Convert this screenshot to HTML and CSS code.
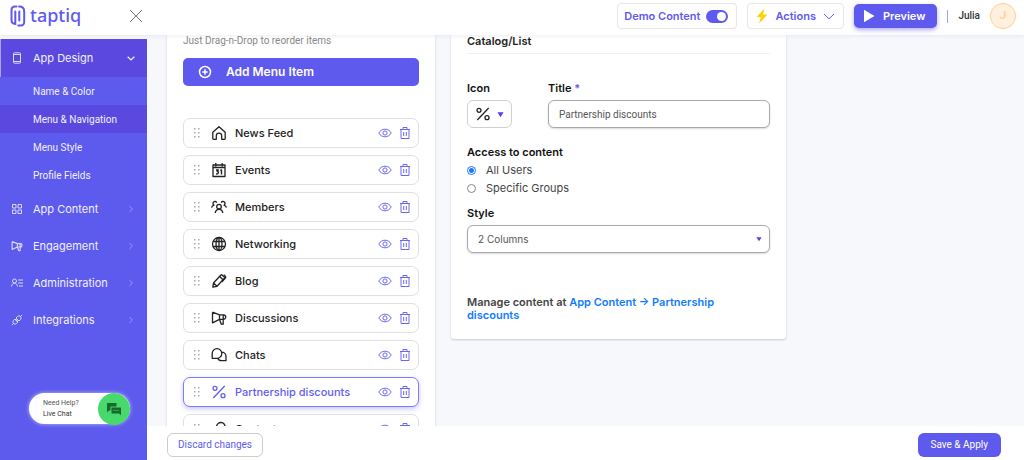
FILE: index.html
```html
<!DOCTYPE html>
<html lang="en">
<head>
<meta charset="utf-8">
<meta name="viewport" content="width=device-width, initial-scale=1">
<title>taptiq – Menu &amp; Navigation</title>
<link rel="stylesheet" href="styles.css">
</head>
<body>
<svg class="sprite" aria-hidden="true">
  <symbol id="grip" viewBox="0 0 8 10"><path fill="currentColor" d="M1 0h1.500v1.500H1zM5 0h1.500v1.500H5zM1 4h1.500v1.500H1zM5 4h1.500v1.500H5zM1 8h1.500v1.500H1zM5 8h1.500v1.500H5z"/></symbol>
  <symbol id="eye" viewBox="0 0 14 14"><path d="M.8 7C2.200 4.500 4.500 3.200 7 3.200S11.800 4.500 13.200 7C11.800 9.500 9.500 10.800 7 10.800S2.200 9.500.8 7z"/><circle cx="7" cy="7" r="2.100"/></symbol>
  <symbol id="trash" viewBox="0 0 12 14"><path d="M1 3.500h10M4 3.300V1.500h4v1.800M2 3.500v9h8v-9M4.700 6v4M7.300 6v4"/></symbol>
  <symbol id="home" viewBox="0 0 16 16"><path d="M1.800 7.300 8 1.800l6.200 5.500v6.200q0 .8-.8.800h-2.700v-3.500a2.700 2.700 0 0 0-5.400 0v3.500H2.600q-.8 0-.8-.8z"/></symbol>
  <symbol id="calendar" viewBox="0 0 16 16"><path d="M2 3h12v11.500H2zM2 5.500h12M4.800 1v3.500M11.200 1v3.500"/><path d="M5 8h2.300L6.200 9.500q1.300 0 1.200 1.200T5 12M9.300 8.500l1.200-.5v4.400" stroke-width="1.400"/></symbol>
  <symbol id="members" viewBox="0 0 16 16"><circle cx="8" cy="7.700" r="2.300"/><path d="M4.200 14c.4-2.300 1.800-3.600 3.800-3.600s3.400 1.300 3.800 3.600M5.800 3.600A2 2 0 1 0 3 6.200C1.700 6.500.9 7.300.6 8.600M10.200 3.600A2 2 0 1 1 13 6.200c1.300.3 2.100 1.100 2.400 2.400"/></symbol>
  <symbol id="globe" viewBox="0 0 16 16"><circle cx="8" cy="8" r="6.500"/><ellipse cx="8" cy="8" rx="3" ry="6.500"/><path d="M8 1.500v13M2.200 5.500h11.600M2.200 10.500h11.600"/></symbol>
  <symbol id="pencil" viewBox="0 0 16 16"><path d="M1.800 14.200 2.500 10 9.700 2.200q.8-.8 1.600 0l1.900 1.700q.8.800 0 1.600L6 13.300zM8.600 3.500l3.400 3.200M2.500 10 6 13.300"/><path d="m12.700 1.800 1.800 1.600q.6.700 0 1.400L10.800 9"/></symbol>
  <symbol id="horn" viewBox="0 0 16 16"><path d="M1.500 2.200v10.600l7-3.500M1.500 2.200l7 2.600h4a2.200 2.200 0 0 1 0 4.500h-4M8.500 4.800v4.500l1.800 4.900h1.900V4.800"/></symbol>
  <symbol id="chats" viewBox="0 0 16 16"><path d="M1.200 11V6.500A4.800 4.800 0 1 1 6 11.300H1.200zM10.800 5.200c2.400 0 4.200 1.800 4.200 4.200v4.300h-4.200c-2 0-3.500-1-4-2.500"/></symbol>
  <symbol id="percent" viewBox="0 0 16 16"><circle cx="4" cy="4.300" r="2"/><circle cx="12" cy="11.700" r="2"/><path d="M13.700 2 2.300 14"/></symbol>
  <symbol id="headset" viewBox="0 0 16 16"><path d="M5.500 5.500a4.300 4.300 0 1 1 8 2.500l-2 2M5.500 5.500l3 3L3 14"/></symbol>
  <symbol id="phone" viewBox="0 0 12 12"><rect x="2.500" y=".8" width="7" height="10.400" rx="1"/><path d="M2.500 2.500h7M2.500 9.500h7"/></symbol>
  <symbol id="grid" viewBox="0 0 12 12"><path d="M1.500 1.500H5V5H1.500zM7 1.500h3.500V5H7zM1.500 7H5v3.500H1.500zM7 7h3.500v3.500H7z"/></symbol>
  <symbol id="admin" viewBox="0 0 12 12"><circle cx="3.500" cy="4" r="2"/><path d="M.5 9.500C.7 7.500 1.800 6.300 3.500 6.300s2.800 1.200 3 3.200M7.200 3H12M7.200 6H12M8 9h4"/></symbol>
  <symbol id="plug" viewBox="0 0 12 12"><path d="m.8 11.200 1.700-1.700M9.500 2.500 11.200.8M4 5 2.500 6.500a2.100 2.100 0 0 0 3 3L7 8zM5 4l1.500-1.500a2.100 2.100 0 0 1 3 3L8 7zM4.500 6.500l1-1M5.500 7.500l1-1"/></symbol>
  <symbol id="right" viewBox="0 0 12 12"><path d="m4.200 2.500 3.500 3.500-3.500 3.500"/></symbol>
  <symbol id="down" viewBox="0 0 12 12"><path d="M1 4l5 4.800L11 4"/></symbol>
  <symbol id="caret" viewBox="0 0 8 8"><path fill="currentColor" d="M.5 1.500h7L4 7z"/></symbol>
</svg>

<header class="topbar">
  <div class="brand">
    <svg class="brand-mark" viewBox="0 0 16 22"><path d="M6.500 1.600H4.700a3.200 3.200 0 0 0-3.200 3.200v10.400q0 3.400 3.800 3.800V6.400M9 1.600q5.200 0 5.200 4.800v10.800a3.200 3.200 0 0 1-3.200 3.200H8.300M9.300 6.500v9"/></svg>
    <span class="brand-name">taptiq</span>
  </div>
  <button class="close" aria-label="Close menu"><svg viewBox="0 0 14 14"><path d="m1 1 12 12M13 1 1 13"/></svg></button>
  <div class="tools">
    <label class="box demo">Demo Content <input class="switch" type="checkbox" checked></label>
    <button class="box actions"><svg class="bolt" viewBox="0 0 12 16"><path d="M8.500.5.500 9h4.300L3 15.500 11.500 6.500H7z"/></svg>Actions<svg class="line chev"><use href="#down"/></svg></button>
    <button class="preview"><svg viewBox="0 0 12 14"><path d="M1 .8v12.400L11.500 7z"/></svg>Preview</button>
    <div class="user"><span>Julia</span><span class="avatar">J</span></div>
  </div>
</header>

<div class="shell">
  <nav class="sidebar">
    <a class="nav open" href="#"><svg class="line"><use href="#phone"/></svg><span>App Design</span><svg class="line arrow"><use href="#down"/></svg></a>
    <div class="subnav">
      <a href="#">Name &amp; Color</a>
      <a class="current" href="#">Menu &amp; Navigation</a>
      <a href="#">Menu Style</a>
      <a href="#">Profile Fields</a>
    </div>
    <a class="nav" href="#"><svg class="line"><use href="#grid"/></svg><span>App Content</span><svg class="line arrow"><use href="#right"/></svg></a>
    <a class="nav" href="#"><svg class="line bold"><use href="#horn"/></svg><span>Engagement</span><svg class="line arrow"><use href="#right"/></svg></a>
    <a class="nav" href="#"><svg class="line"><use href="#admin"/></svg><span>Administration</span><svg class="line arrow"><use href="#right"/></svg></a>
    <a class="nav" href="#"><svg class="line"><use href="#plug"/></svg><span>Integrations</span><svg class="line arrow"><use href="#right"/></svg></a>
    <button class="help">
      <span class="help-text"><span>Need Help?</span><strong>Live Chat</strong></span>
      <span class="help-icon"><svg viewBox="0 0 16 14"><path fill="#17692f" d="M1 1h9.500v3.500h-6v4H3L1 10.500z"/><path fill="#17692f" d="M5.500 5.500H15v7.800L13 11.500H5.500z"/><path stroke="#47d96c" stroke-dasharray="1 1" d="M7.500 8.500h5.500"/></svg></span>
    </button>
  </nav>

  <div class="work">
    <main class="panels">
      <section class="card menu-card">
        <p class="hint">Just Drag-n-Drop to reorder items</p>
        <button class="add"><svg class="line" viewBox="0 0 14 14"><circle cx="7" cy="7" r="5.500"/><path d="M7 4.300v5.400M4.300 7h5.400"/></svg>Add Menu Item</button>
        <ul class="items">
          <li class="item"><svg class="grip"><use href="#grip"/></svg><svg class="line glyph"><use href="#home"/></svg><span>News Feed</span><button aria-label="Hide News Feed"><svg class="line"><use href="#eye"/></svg></button><button aria-label="Delete News Feed"><svg class="line"><use href="#trash"/></svg></button></li>
          <li class="item"><svg class="grip"><use href="#grip"/></svg><svg class="line glyph"><use href="#calendar"/></svg><span>Events</span><button aria-label="Hide Events"><svg class="line"><use href="#eye"/></svg></button><button aria-label="Delete Events"><svg class="line"><use href="#trash"/></svg></button></li>
          <li class="item"><svg class="grip"><use href="#grip"/></svg><svg class="line glyph"><use href="#members"/></svg><span>Members</span><button aria-label="Hide Members"><svg class="line"><use href="#eye"/></svg></button><button aria-label="Delete Members"><svg class="line"><use href="#trash"/></svg></button></li>
          <li class="item"><svg class="grip"><use href="#grip"/></svg><svg class="line glyph"><use href="#globe"/></svg><span>Networking</span><button aria-label="Hide Networking"><svg class="line"><use href="#eye"/></svg></button><button aria-label="Delete Networking"><svg class="line"><use href="#trash"/></svg></button></li>
          <li class="item"><svg class="grip"><use href="#grip"/></svg><svg class="line glyph"><use href="#pencil"/></svg><span>Blog</span><button aria-label="Hide Blog"><svg class="line"><use href="#eye"/></svg></button><button aria-label="Delete Blog"><svg class="line"><use href="#trash"/></svg></button></li>
          <li class="item"><svg class="grip"><use href="#grip"/></svg><svg class="line glyph"><use href="#horn"/></svg><span>Discussions</span><button aria-label="Hide Discussions"><svg class="line"><use href="#eye"/></svg></button><button aria-label="Delete Discussions"><svg class="line"><use href="#trash"/></svg></button></li>
          <li class="item"><svg class="grip"><use href="#grip"/></svg><svg class="line glyph"><use href="#chats"/></svg><span>Chats</span><button aria-label="Hide Chats"><svg class="line"><use href="#eye"/></svg></button><button aria-label="Delete Chats"><svg class="line"><use href="#trash"/></svg></button></li>
          <li class="item selected"><svg class="grip"><use href="#grip"/></svg><svg class="line glyph"><use href="#percent"/></svg><span>Partnership discounts</span><button aria-label="Hide Partnership discounts"><svg class="line"><use href="#eye"/></svg></button><button aria-label="Delete Partnership discounts"><svg class="line"><use href="#trash"/></svg></button></li>
          <li class="item"><svg class="grip"><use href="#grip"/></svg><svg class="line glyph"><use href="#headset"/></svg><span>Contact</span><button aria-label="Hide Contact"><svg class="line"><use href="#eye"/></svg></button><button aria-label="Delete Contact"><svg class="line"><use href="#trash"/></svg></button></li>
        </ul>
      </section>

      <form class="card detail">
        <h2>Catalog/List</h2>
        <div class="pair">
          <div class="field">
            <label for="icon">Icon</label>
            <button class="icon-pick" id="icon" type="button"><svg class="line glyph"><use href="#percent"/></svg><svg class="caret"><use href="#caret"/></svg></button>
          </div>
          <div class="field grow">
            <label for="title">Title <span class="req">*</span></label>
            <input class="control" id="title" type="text" value="Partnership discounts">
          </div>
        </div>
        <fieldset>
          <legend>Access to content</legend>
          <label><input type="radio" name="access" checked>All Users</label>
          <label><input type="radio" name="access">Specific Groups</label>
        </fieldset>
        <div class="field">
          <label for="style">Style</label>
          <div class="select">
            <select class="control" id="style"><option>2 Columns</option></select>
            <svg class="caret"><use href="#caret"/></svg>
          </div>
        </div>
        <p class="manage">Manage content at <a href="#">App Content → Partnership discounts</a></p>
      </form>
    </main>
    <footer class="footer">
      <button class="discard">Discard changes</button>
      <button class="save">Save &amp; Apply</button>
    </footer>
  </div>
</div>
</body>
</html>
```
FILE: styles.css
```css
* { box-sizing: border-box; }

body {
  margin: 0;
  height: 100vh;
  display: flex;
  flex-direction: column;
  overflow: hidden;
  background: #f7f8fc;
  color: #222;
  font: 11px/14px Inter, sans-serif;
}

button, input, select { font: inherit; color: inherit; }
button { padding: 0; border: 0; background: none; cursor: pointer; }
a { color: inherit; text-decoration: none; }
svg { display: block; flex: none; }
.sprite { position: absolute; width: 0; height: 0; }
.line { fill: none; stroke: currentColor; stroke-linejoin: round; }

/* Compact text */
.hint, .subnav, .help-text, .footer button, #title { font-family: Roboto, sans-serif; }

/* Top bar */
.topbar {
  flex: none;
  z-index: 1;
  height: 35px;
  padding: 0 8px 3px 10px;
  display: flex;
  align-items: center;
  background: #fff;
  box-shadow: 0 1px 4px rgba(40, 40, 80, 0.08);
}
.brand { width: 119px; display: flex; align-items: center; gap: 4px; color: #5f5aee; }
.brand-mark { width: 16px; height: 22px; fill: none; stroke: currentColor; stroke-width: 2; stroke-linecap: round; }
.brand-name { font: 500 18px/22px "Noto Sans", sans-serif; padding-bottom: 2px; }
.close svg { width: 14px; height: 14px; fill: none; stroke: #777; }
.tools { margin-left: auto; display: flex; align-items: center; gap: 10px; }
.box {
  height: 26px;
  display: flex;
  align-items: center;
  border: 1px solid #e6e6e8;
  border-radius: 4px;
  color: #5f5aee;
  font-size: 11px;
  font-weight: 600;
}
.demo { padding: 0 8px 0 6px; gap: 6px; }
.switch {
  appearance: none;
  width: 22px;
  height: 13px;
  margin: 0;
  padding: 2px;
  display: flex;
  justify-content: flex-end;
  border-radius: 7px;
  background: #5f5aee;
}
.switch::before { content: ""; width: 9px; height: 9px; border-radius: 50%; background: #fff; }
.actions { padding: 0 8px; }
.bolt { width: 12px; height: 16px; margin-right: 7px; fill: #ffd400; }
.chev { width: 12px; height: 12px; margin-left: 7px; }
.preview {
  height: 24px;
  padding: 0 12px 0 9px;
  display: flex;
  align-items: center;
  gap: 8px;
  border-radius: 5px;
  background: #5f5aee;
  color: #fff;
  font-size: 11px;
  font-weight: 600;
  box-shadow: 0 2px 4px rgba(95, 90, 238, 0.5);
}
.preview svg { width: 12px; height: 14px; fill: #fff; }
.user { display: flex; align-items: center; gap: 10px; color: #333; font: 500 10px/14px Roboto, sans-serif; }
.user::before { content: ""; width: 1px; height: 13px; background: #a5a2f6; }
.avatar {
  width: 26px;
  height: 26px;
  display: grid;
  place-items: center;
  border: 1px solid #ffd08a;
  border-radius: 50%;
  background: #fff0e0;
  color: #ffcf8c;
  font-size: 11px;
}

/* Sidebar */
.shell { flex: 1; min-height: 0; display: flex; }
.sidebar {
  flex: none;
  width: 147px;
  margin-top: 4px;
  padding-bottom: 36px;
  display: flex;
  flex-direction: column;
  background: #5d5aee;
  color: #f1f0ff;
}
.nav {
  height: 37px;
  padding: 0 11px;
  display: flex;
  align-items: center;
  gap: 10px;
  font-size: 11px;
}
.nav svg { width: 12px; height: 12px; opacity: 0.85; }
.nav .bold { stroke-width: 1.5; }
.nav .arrow { width: 10px; height: 10px; margin-left: auto; opacity: 0.5; }
.open { height: 38px; background: #5b49df; border-left: 1px solid #a9a5f5; padding-left: 10px; }
.open .arrow { width: 8px; height: 8px; margin-right: 1px; opacity: 1; stroke-width: 2; }
.subnav { margin-bottom: 1px; font-size: 10px; }
.subnav a { height: 28px; padding: 1px 0 0 33px; display: flex; align-items: center; }
.subnav .current { background: #5b49df; }
.help {
  width: 101px;
  height: 31px;
  margin: auto 0 0 29px;
  padding-left: 14px;
  display: flex;
  align-items: center;
  justify-content: space-between;
  border-radius: 16px;
  background: #fff;
  box-shadow: 0 0 4px rgba(255, 255, 255, 0.6);
  text-align: left;
}
.help-text { display: grid; color: #555; font-size: 7px; line-height: 11px; }
.help-text strong { color: #333; font-weight: 400; }
.help-icon { width: 32px; height: 32px; display: grid; place-items: center; border-radius: 50%; background: #47d96c; }
.help-icon svg { width: 16px; height: 14px; }

/* Work area */
.work { flex: 1; min-width: 0; display: flex; flex-direction: column; }
.panels {
  flex: 1;
  min-height: 0;
  padding-left: 20px;
  display: grid;
  grid-template-columns: 268fr 335fr 222fr;
  align-items: start;
  gap: 16px;
  overflow: hidden;
}
.card { padding: 0 16px; background: #fff; box-shadow: 0 1px 2px rgba(30, 30, 60, 0.22); }
.hint { margin: 0 0 11px; color: #888; font-size: 10px; line-height: 12px; }
.add {
  width: 100%;
  height: 28px;
  padding-left: 15px;
  display: flex;
  align-items: center;
  gap: 14px;
  border-radius: 5px;
  background: #5f5aee;
  color: #fff;
  font-size: 12px;
  font-weight: 600;
}
.add svg { width: 14px; height: 14px; stroke-width: 1.5; }
.items { margin: 32px 0 0; padding: 0 0 16px; display: grid; gap: 7px; list-style: none; }
.item {
  height: 30px;
  padding: 0 6px 1px 9px;
  display: flex;
  align-items: center;
  border: 1px solid #e0e0e0;
  border-radius: 7px;
  background: #fff;
  font-size: 11px;
  font-weight: 500;
}
.grip { width: 8px; height: 10px; color: #aaa; }
.glyph { width: 16px; height: 16px; stroke-width: 1.3; }
.item .glyph { margin: 0 8px 0 10px; }
.item span { flex: 1; }
.item button { color: #6c67f1; }
.item button svg { width: 14px; height: 14px; }
.item button + button { margin-left: 6px; }
.selected { border-color: #7f7bf3; color: #625df0; box-shadow: 0 2px 5px rgba(95, 90, 238, 0.35); }

/* Detail form */
.detail { padding-bottom: 17px; border-radius: 0 0 3px 3px; }
.detail h2 {
  margin: 0 0 27px;
  padding-bottom: 6px;
  border-bottom: 1px solid #f0f0f0;
  font-size: 11px;
  line-height: 12px;
  font-weight: 600;
}
.pair { display: flex; gap: 36px; }
.field { display: grid; gap: 5px; }
.grow { flex: 1; }
.field > label, legend { padding: 0; color: #111; font-size: 11px; font-weight: 600; }
.req { color: #5f5aee; }
.icon-pick {
  width: 45px;
  height: 28px;
  display: flex;
  align-items: center;
  justify-content: center;
  gap: 6px;
  border: 1px solid #d0d0d0;
  border-radius: 6px;
}
.icon-pick .glyph { width: 16px; height: 16px; }
.caret { width: 7px; height: 7px; color: #5f40df; }
.control {
  appearance: none;
  width: 100%;
  height: 28px;
  padding: 0 10px;
  border: 1px solid #aaa;
  border-radius: 6px;
  background: #fff;
  box-shadow: 0 1px 2px rgba(0, 0, 0, 0.15);
  color: #555;
  font-size: 10px;
}
fieldset { margin: 17px 0 9px; padding: 0; border: 0; }
fieldset label { height: 18px; display: flex; align-items: center; gap: 10px; color: #444; }
legend { margin-bottom: 2px; }
input[type="radio"] {
  appearance: none;
  width: 9px;
  height: 9px;
  margin: 0;
  border: 1px solid #888;
  border-radius: 50%;
}
input[type="radio"]:checked { border-color: #1677ff; background: radial-gradient(#1677ff 40%, #fff 60%); }
.select { display: grid; align-items: center; }
.select > * { grid-area: 1 / 1; }
.select .caret { width: 6px; height: 6px; margin-right: 8px; justify-self: end; pointer-events: none; }
.manage { margin: 43px 0 0; padding-right: 40px; color: #444; font-size: 11px; line-height: 13px; font-weight: 600; }
.manage a { color: #117cff; }

/* Footer */
.footer {
  flex: none;
  height: 34px;
  padding: 3px 23px 0 20px;
  display: flex;
  align-items: center;
  justify-content: space-between;
  background: #fff;
}
.footer button { height: 24px; padding: 0 10px; border-radius: 6px; font-size: 10px; }
.discard { border: 1px solid #ccc; color: #625df0; }
.footer .save { padding: 0 13px; background: #5f5aee; color: #fff; }
```
